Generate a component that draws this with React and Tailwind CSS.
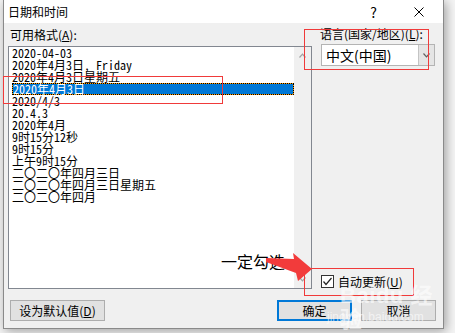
import React from "react";

const ui = { fontFamily: '"Noto Sans CJK SC", "Noto Sans", sans-serif' };
const mono = { fontFamily: '"Noto Sans Mono CJK SC", "Noto Sans CJK SC", monospace' };

const formats = [
  "2020-04-03",
  "2020年4月3日, Friday",
  "2020年4月3日星期五",
  "2020年4月3日",
  "2020/4/3",
  "20.4.3",
  "2020年4月",
  "9时15分12秒",
  "9时15分",
  "上午9时15分",
  "二〇二〇年四月三日",
  "二〇二〇年四月三日星期五",
  "二〇二〇年四月",
];

const Chevron = ({ up = false, className = "" }) => (
  <svg width="7" height="5" viewBox="0 0 7 5" className={className}>
    <path
      d={up ? "M0.5 4.5 L3.5 1.2 L6.5 4.5" : "M0.5 0.5 L3.5 3.8 L6.5 0.5"}
      fill="none"
      stroke="currentColor"
      strokeWidth="1.2"
    />
  </svg>
);

export default function App() {
  return (
    <div className="relative w-[455px] h-[333px] overflow-hidden bg-[#f4f4f4] pl-[3px] text-black" style={ui}>
      <div className="flex flex-col w-[441px] h-[329px] bg-[#f0f0f0] border-x border-b border-[#8a8a8a] shadow-[2px_2px_10px_rgba(0,0,0,0.35)]">
        {/* title bar */}
        <div className="flex items-center h-[23px] bg-white pl-[4px] text-[12px] leading-[16px]">
          <span>日期和时间</span>
          <span className="ml-auto text-[14px] leading-[16px]">?</span>
          <svg width="10" height="10" viewBox="0 0 10 10" className="ml-[37px] mr-[19px]">
            <path d="M0.5 0.5 L9.5 9.5 M9.5 0.5 L0.5 9.5" stroke="#000" strokeWidth="1" />
          </svg>
        </div>

        {/* body */}
        <div className="flex pl-[4px] gap-[8px]">
          <div className="flex flex-col w-[304px] pt-[4px]">
            <div className="h-[16px] text-[12px] leading-[16px] pl-[2px]">
              可用格式(<span className="underline">A</span>):
            </div>
            <div className="mt-[3px] h-[243px] bg-white border border-[#828790] flex">
              <div className="flex-1 pl-[3px] text-[12px]" style={mono}>
                {formats.map((f, i) =>
                  i === 3 ? (
                    <div key={i} className="h-[12px] bg-[#ff9a00]">
                      <div className="h-[12px] leading-[10px] border border-dotted border-black bg-[#0078d7] bg-clip-padding text-white whitespace-nowrap">
                        {f}
                      </div>
                    </div>
                  ) : (
                    <div key={i} className="h-[12px] leading-[12px] whitespace-nowrap">
                      {f}
                    </div>
                  )
                )}
              </div>
              <div className="w-[17px] bg-[#f0f0f0] flex flex-col items-center justify-between py-[6px] text-[#a3a3a3]">
                <Chevron up />
                <Chevron />
              </div>
            </div>
          </div>

          <div className="flex flex-col w-[115px] pt-[3px]">
            <div className="h-[16px] text-[12px] leading-[16px] whitespace-nowrap">
              语言(国家/地区)(<span className="underline">L</span>):
            </div>
            <div className="mt-[2px] ml-[1px] h-[22px] flex bg-white border border-[#b4b4b4]">
              <div className="flex-1 pl-[4px] text-[14px] leading-[20px]">中文(中国)</div>
              <div className="w-[16px] bg-[#e5e5e5] border-l border-[#c4c4c4] flex items-center justify-center text-[#606060]">
                <Chevron />
              </div>
            </div>
            <div className="mt-auto mb-[1px] ml-[1px] flex items-center gap-[4px] h-[13px]">
              <div className="w-[13px] h-[13px] border border-[#333] bg-white flex items-center justify-center">
                <svg width="11" height="11" viewBox="0 0 11 11">
                  <path d="M1.5 5.5 L4 8.5 L9.5 2" fill="none" stroke="#222" strokeWidth="1.2" />
                </svg>
              </div>
              <span className="text-[12px] leading-[16px] whitespace-nowrap">
                自动更新(<span className="underline">U</span>)
              </span>
            </div>
          </div>
        </div>

        {/* buttons */}
        <div className="flex mt-[11px] pl-[6px] pr-[7px] text-[12px]">
          <button className="w-[95px] h-[21px] bg-[#e1e1e1] border border-[#adadad] leading-[19px]">
            设为默认值(<span className="underline">D</span>)
          </button>
          <div className="ml-auto flex gap-[9px]">
            <button className="w-[75px] h-[21px] bg-[#e1e1e1] border-2 border-[#0078d7] leading-[17px]">确定</button>
            <button className="w-[75px] h-[21px] bg-[#e1e1e1] border border-[#adadad] leading-[19px]">取消</button>
          </div>
        </div>
      </div>

      {/* annotations */}
      <div className="absolute left-[304px] top-[29px] w-[125px] h-[41px] border border-[#f03a3a]" />
      <div className="absolute left-[3px] top-[76px] w-[220px] h-[28px] border border-[#f03a3a]" />
      <div className="absolute left-[304px] top-[268px] w-[110px] h-[28px] border border-[#f03a3a]" />
      <div className="absolute left-[221px] top-[251px] text-[16px] leading-[20px]">一定勾选</div>
      <svg className="absolute left-0 top-0" width="455" height="333" viewBox="0 0 455 333">
        <polygon points="266,258 294,259 293,253 312,269 298,281 296,273 266,262" fill="#f23b3b" />
      </svg>
      <div className="absolute left-[340px] top-[284px] text-[22px] leading-[24px] font-bold text-white/60 tracking-wide" style={{ fontFamily: '"Liberation Sans", "Noto Sans CJK SC", sans-serif' }}>
        Baidu 经验
      </div>
      <div className="absolute left-[327px] top-[310px] text-[12px] leading-[14px] text-white/60" style={{ fontFamily: '"Liberation Sans", sans-serif' }}>
        jingyan.baidu.com
      </div>
    </div>
  );
}
